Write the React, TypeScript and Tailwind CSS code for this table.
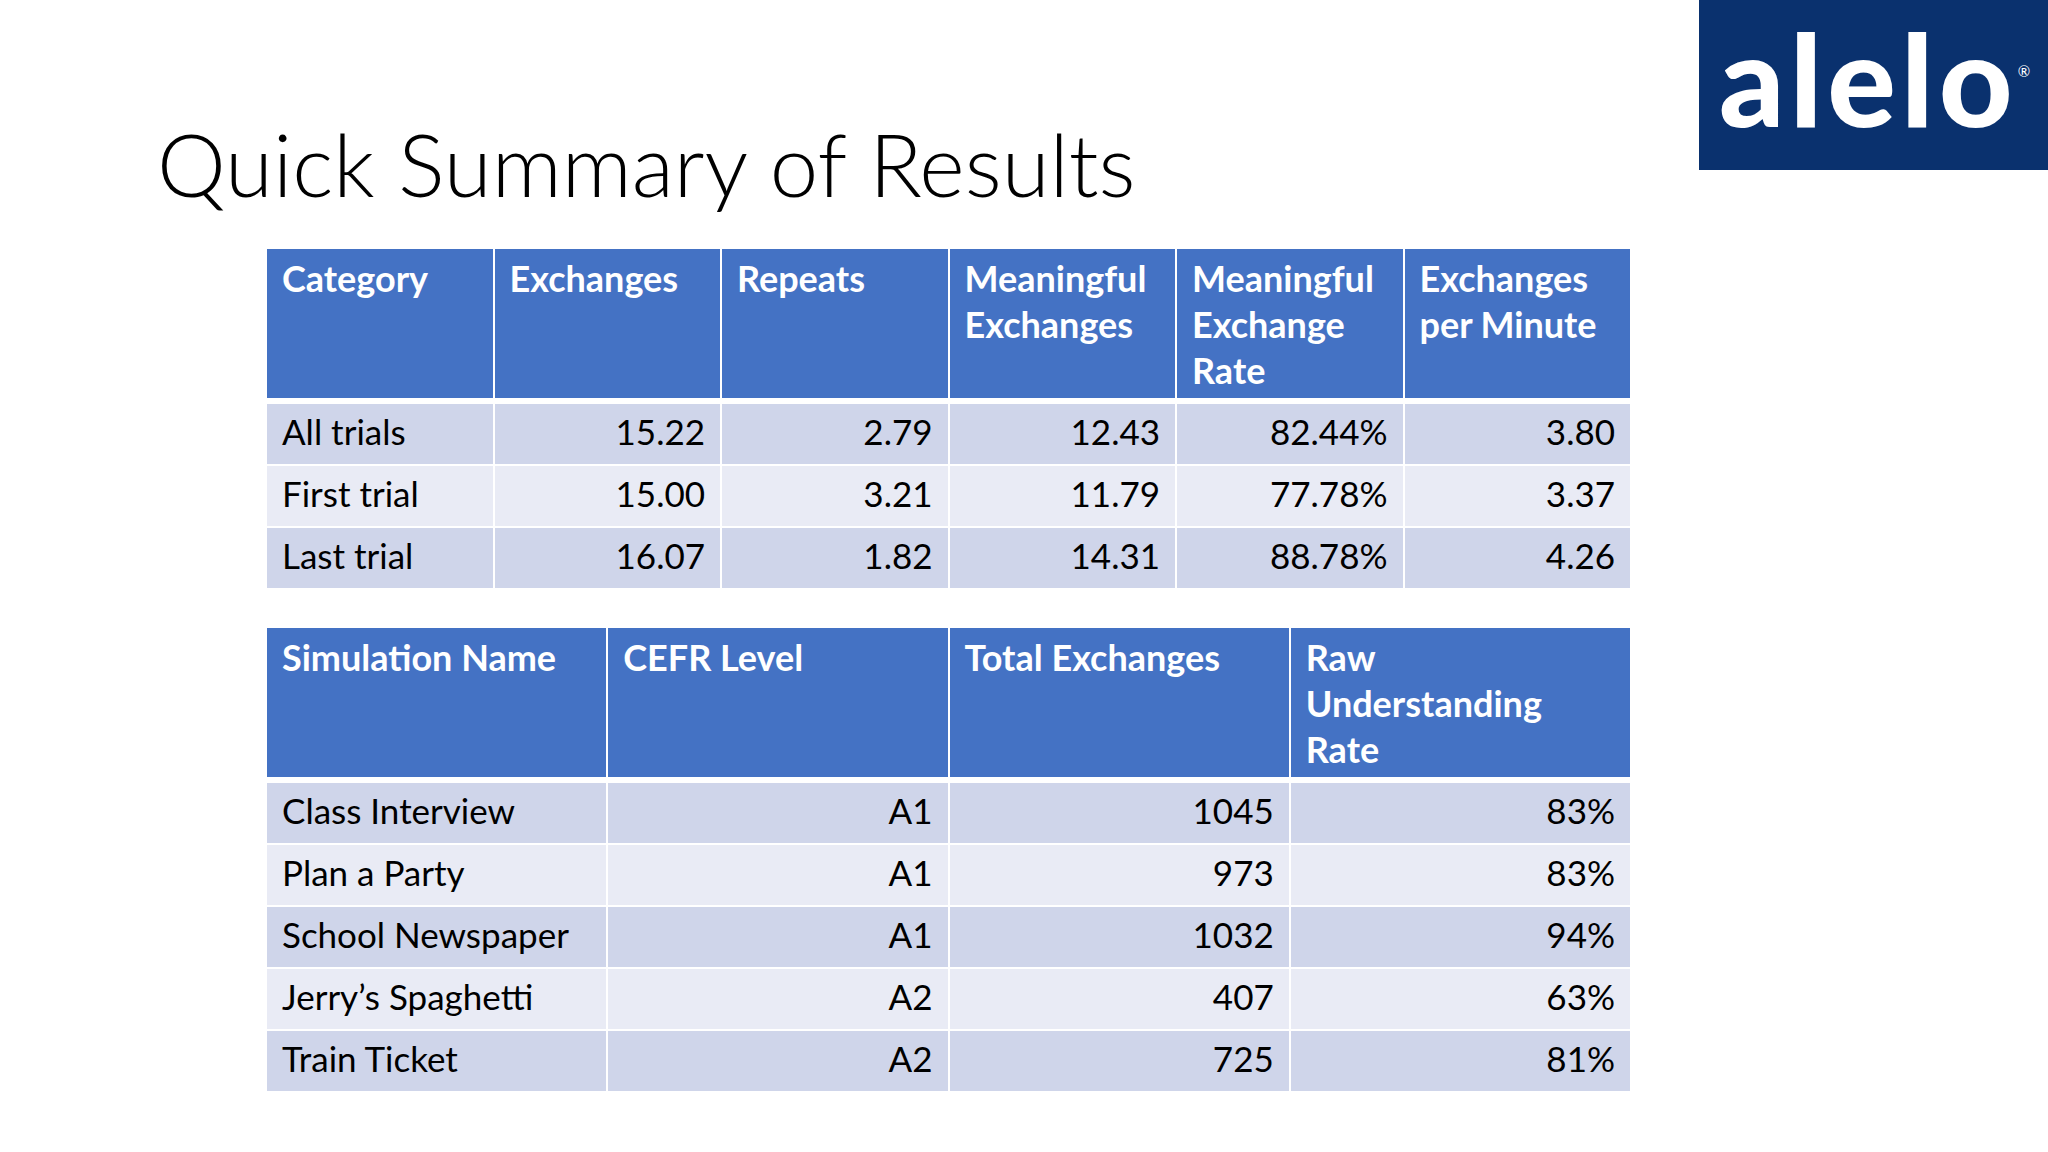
import React from "react";

const FONT = { fontFamily: "Lato, 'Open Sans', sans-serif" };

const summaryHead: React.ReactNode[] = [
  "Category",
  "Exchanges",
  "Repeats",
  <>Meaningful<br />Exchanges</>,
  <>Meaningful<br />Exchange<br />Rate</>,
  <>Exchanges<br />per Minute</>,
];

const summaryRows = [
  ["All trials", "15.22", "2.79", "12.43", "82.44%", "3.80"],
  ["First trial", "15.00", "3.21", "11.79", "77.78%", "3.37"],
  ["Last trial", "16.07", "1.82", "14.31", "88.78%", "4.26"],
];

const simHead: React.ReactNode[] = [
  "Simulation Name",
  "CEFR Level",
  "Total Exchanges",
  <>Raw<br />Understanding<br />Rate</>,
];

const simRows = [
  ["Class Interview", "A1", "1045", "83%"],
  ["Plan a Party", "A1", "973", "83%"],
  ["School Newspaper", "A1", "1032", "94%"],
  ["Jerry’s Spaghetti", "A2", "407", "63%"],
  ["Train Ticket", "A2", "725", "81%"],
];

function DataTable({
  head,
  rows,
  cols,
}: {
  head: React.ReactNode[];
  rows: string[][];
  cols: string;
}) {
  return (
    <div className="flex flex-col">
      {/* header */}
      <div className={`grid ${cols} gap-x-[2px]`}>
        {head.map((h, i) => (
          <div
            key={i}
            className="h-[149px] bg-[#4472C4] px-[15px] pt-[6px] text-[36px] leading-[46px] font-bold text-white"
          >
            {h}
          </div>
        ))}
      </div>
      {/* body */}
      <div className="mt-[6px] flex flex-col gap-y-[2px]">
        {rows.map((r, ri) => (
          <div key={ri} className={`grid ${cols} gap-x-[2px]`}>
            {r.map((c, ci) => (
              <div
                key={ci}
                className={`h-[60px] px-[15px] pt-[4px] text-[35px] leading-[46px] whitespace-nowrap text-black ${
                  ri % 2 === 0 ? "bg-[#CFD5EA]" : "bg-[#E9EBF5]"
                } ${ci === 0 ? "text-left" : "text-right"}`}
              >
                {c}
              </div>
            ))}
          </div>
        ))}
      </div>
    </div>
  );
}

export default function App() {
  return (
    <div className="w-[2048px] h-[1152px] bg-white flex flex-col overflow-hidden" style={FONT}>
      {/* Title + logo */}
      <div className="flex justify-between items-start h-[249px]">
        <h1 className="mt-[120px] ml-[157px] text-[87px] leading-none font-light text-black">
          Quick Summary of Results
        </h1>
        <div className="w-[349px] h-[170px] bg-[#0A316E] flex items-start pl-[20px] pt-[14px]">
          <span className="text-[128px] leading-none font-black text-white tracking-[0.04em]">
            alelo
          </span>
          <span className="text-[15px] leading-none text-white mt-[50px]">®</span>
        </div>
      </div>

      {/* Tables */}
      <div className="ml-[267px] w-[1363px] flex flex-col gap-y-[40px]">
        <DataTable head={summaryHead} rows={summaryRows} cols="grid-cols-6" />
        <DataTable head={simHead} rows={simRows} cols="grid-cols-4" />
      </div>
    </div>
  );
}
